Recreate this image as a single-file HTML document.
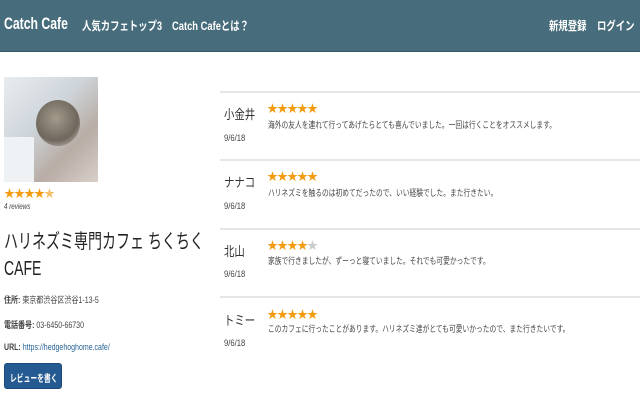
<!DOCTYPE html>
<html><head><meta charset="utf-8"><style>
*{margin:0;padding:0;box-sizing:border-box}
body{width:640px;height:400px;overflow:hidden;background:#fff;font-family:"Liberation Sans","Noto Sans CJK JP",sans-serif;color:#333;position:relative}
.hd{position:absolute;left:0;top:0;width:640px;height:52px;background:#476c7b;border-bottom:1px solid #3a5866;color:#fff;font-weight:bold}
.hd span{position:absolute;top:17px;font-size:12px;white-space:nowrap;transform:scaleX(0.78);transform-origin:left}
.a{position:absolute;white-space:nowrap}
.c{transform:scaleX(0.78);transform-origin:left}
.st{color:#f39c12;font-size:11px}
.line{position:absolute;left:220px;width:420px;height:2px;background:#e6e6e6}
.nm{position:absolute;left:224px;font-size:13px;color:#333;white-space:nowrap;transform:scaleX(0.8);transform-origin:left}
.dt{position:absolute;left:224px;font-size:9px;color:#444;transform:scaleX(0.85);transform-origin:left}
.rs{position:absolute;left:267px;font-size:11px;color:#f39c12;letter-spacing:-1px}
.tx{position:absolute;left:268px;font-size:9px;color:#444;white-space:nowrap;transform:scaleX(0.75);transform-origin:left}
.lb{font-size:9px;color:#444}
</style></head><body>
<div class="hd">
<span style="left:4px;top:14px;font-size:17px;transform:scaleX(0.72)">Catch Cafe</span>
<span style="left:82px">人気カフェトップ3</span>
<span style="left:172px">Catch Cafeとは？</span>
<span style="left:549px">新規登録</span>
<span style="left:597px">ログイン</span>
</div>
<div class="a" style="left:4px;top:77px;width:94px;height:105px;background:linear-gradient(135deg,#e8ecef,#cfd6db 40%,#b8aca5 70%,#d9cfc9)">
<div style="position:absolute;left:32px;top:23px;width:44px;height:46px;border-radius:50%;background:radial-gradient(circle at 45% 40%,#a39a8c,#6f675c 60%,#d8d4cc)"></div>
<div style="position:absolute;left:0;top:60px;width:30px;height:45px;background:#eef2f4"></div>
</div>
<div class="a st" style="left:4px;top:185px;letter-spacing:-1px">★★★★<span style="color:#f5c06a">★</span></div>
<div class="a c" style="left:4px;top:202px;font-size:8px;font-style:italic;color:#444">4 reviews</div>
<div class="a" style="left:4px;top:229px;font-size:20px;line-height:27px;color:#222;transform:scaleX(0.7);transform-origin:left">ハリネズミ専門カフェ ちくちく<br>CAFE</div>
<div class="a lb c" style="left:4px;top:293px"><b>住所:</b> 東京都渋谷区渋谷1-13-5</div>
<div class="a lb c" style="left:4px;top:318px"><b>電話番号:</b> 03-6450-66730</div>
<div class="a lb c" style="left:4px;top:342px"><b>URL:</b> <span style="color:#2a6496">https://hedgehoghome.cafe/</span></div>
<div class="a" style="left:4px;top:363px;width:58px;height:26px;background:#245a91;border:1px solid #1b4a7a;border-radius:3px"></div>
<div class="a" style="left:10px;top:370px;color:#fff;font-size:10px;font-weight:bold;transform:scaleX(0.68);transform-origin:left">レビューを書く</div>

<div class="line" style="top:91px"></div>
<div class="nm" style="top:104px">小金井</div><div class="dt" style="top:133px">9/6/18</div>
<div class="rs" style="top:100px">★★★★★</div><div class="tx" style="top:118px">海外の友人を連れて行ってあげたらとても喜んでいました。一回は行くことをオススメします。</div>

<div class="line" style="top:159px"></div>
<div class="nm" style="top:172px">ナナコ</div><div class="dt" style="top:201px">9/6/18</div>
<div class="rs" style="top:168px">★★★★★</div><div class="tx" style="top:186px">ハリネズミを触るのは初めてだったので、いい経験でした。また行きたい。</div>

<div class="line" style="top:228px"></div>
<div class="nm" style="top:241px">北山</div><div class="dt" style="top:269px">9/6/18</div>
<div class="rs" style="top:237px">★★★★<span style="color:#ccc">★</span></div><div class="tx" style="top:254px">家族で行きましたが、ずーっと寝ていました。それでも可愛かったです。</div>

<div class="line" style="top:296px"></div>
<div class="nm" style="top:310px">トミー</div><div class="dt" style="top:338px">9/6/18</div>
<div class="rs" style="top:306px">★★★★★</div><div class="tx" style="top:322px">このカフェに行ったことがあります。ハリネズミ達がとても可愛いかったので、また行きたいです。</div>
</body></html>
